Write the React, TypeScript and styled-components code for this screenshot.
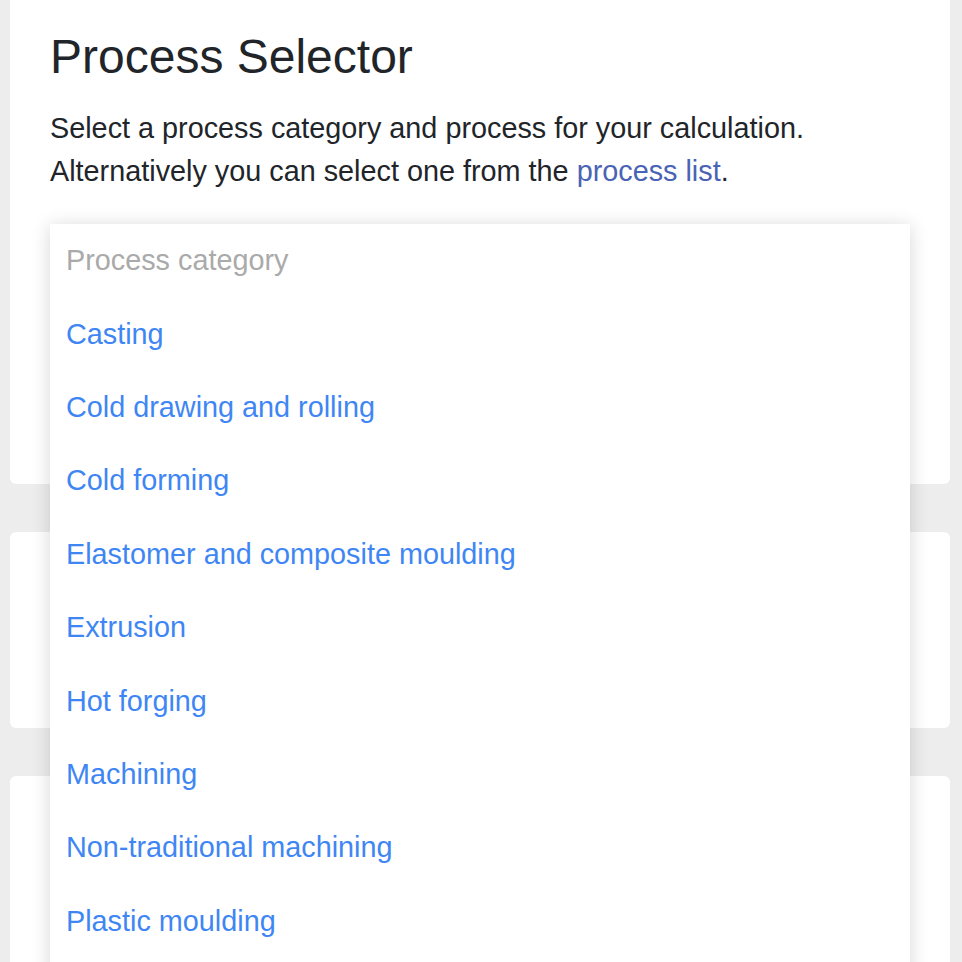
import styled, { createGlobalStyle } from "styled-components";

const GlobalStyle = createGlobalStyle`
  html, body {
    margin: 0;
    padding: 0;
    overflow: hidden;
    background: #ededed;
    font-family: "Liberation Sans", Arial, Helvetica, sans-serif;
    color: #212529;
  }
`;

const Page = styled.div`
  display: flex;
  flex-direction: column;
  gap: 48px;
  padding: 0 12px 40px 10px;
`;

const Card = styled.section<{ $top?: boolean; $height?: number }>`
  position: relative;
  background: #ffffff;
  border-radius: ${({ $top }) => ($top ? "0 0 6px 6px" : "6px")};
  padding: ${({ $top }) => ($top ? "28px 40px 40px" : "40px")};
  min-height: ${({ $height }) => ($height ? `${$height}px` : "auto")};
  box-sizing: border-box;
`;

const Title = styled.h1`
  margin: 0 0 21px;
  font-size: 48px;
  line-height: 57.6px;
  font-weight: 400;
  color: #212529;
`;

const Lead = styled.p`
  margin: 0 0 31px;
  font-size: 28.8px;
  line-height: 43.2px;
`;

const Link = styled.a`
  color: #4a63b4;
  text-decoration: none;
`;

const SelectWrap = styled.div`
  position: relative;
`;

// the closed select boxes sit under the open menu
const SelectField = styled.div`
  height: 60px;
  border: 1px solid #ced4da;
  border-radius: 4px;
  margin-bottom: 24px;
`;

const Menu = styled.ul`
  position: absolute;
  top: 0;
  left: 0;
  right: 0;
  z-index: 10;
  margin: 0;
  padding: 0 0 24px;
  list-style: none;
  background: #ffffff;
  box-shadow: 0 2px 18px rgba(0, 0, 0, 0.16);
`;

const MenuItem = styled.li<{ $placeholder?: boolean }>`
  height: 73.4px;
  display: flex;
  align-items: center;
  padding: 0 16px;
  font-size: 28.8px;
  color: ${({ $placeholder }) => ($placeholder ? "#aaaaaa" : "#3f86f5")};
  white-space: nowrap;
`;

const categories = [
  "Casting",
  "Cold drawing and rolling",
  "Cold forming",
  "Elastomer and composite moulding",
  "Extrusion",
  "Hot forging",
  "Machining",
  "Non-traditional machining",
  "Plastic moulding",
];

const App = () => {
  return (
    <>
      <GlobalStyle />
      <Page>
        <Card $top $height={484}>
          <Title>Process Selector</Title>
          <Lead>
            Select a process category and process for your calculation.
            <br />
            Alternatively you can select one from the{" "}
            <Link href="#">process list</Link>.
          </Lead>
          <SelectWrap>
            <SelectField />
            <SelectField />
            <Menu>
              <MenuItem $placeholder>Process category</MenuItem>
              {categories.map((c) => (
                <MenuItem key={c}>{c}</MenuItem>
              ))}
            </Menu>
          </SelectWrap>
        </Card>
        <Card $height={196} />
        <Card $height={240} />
      </Page>
    </>
  );
};

export default App;
